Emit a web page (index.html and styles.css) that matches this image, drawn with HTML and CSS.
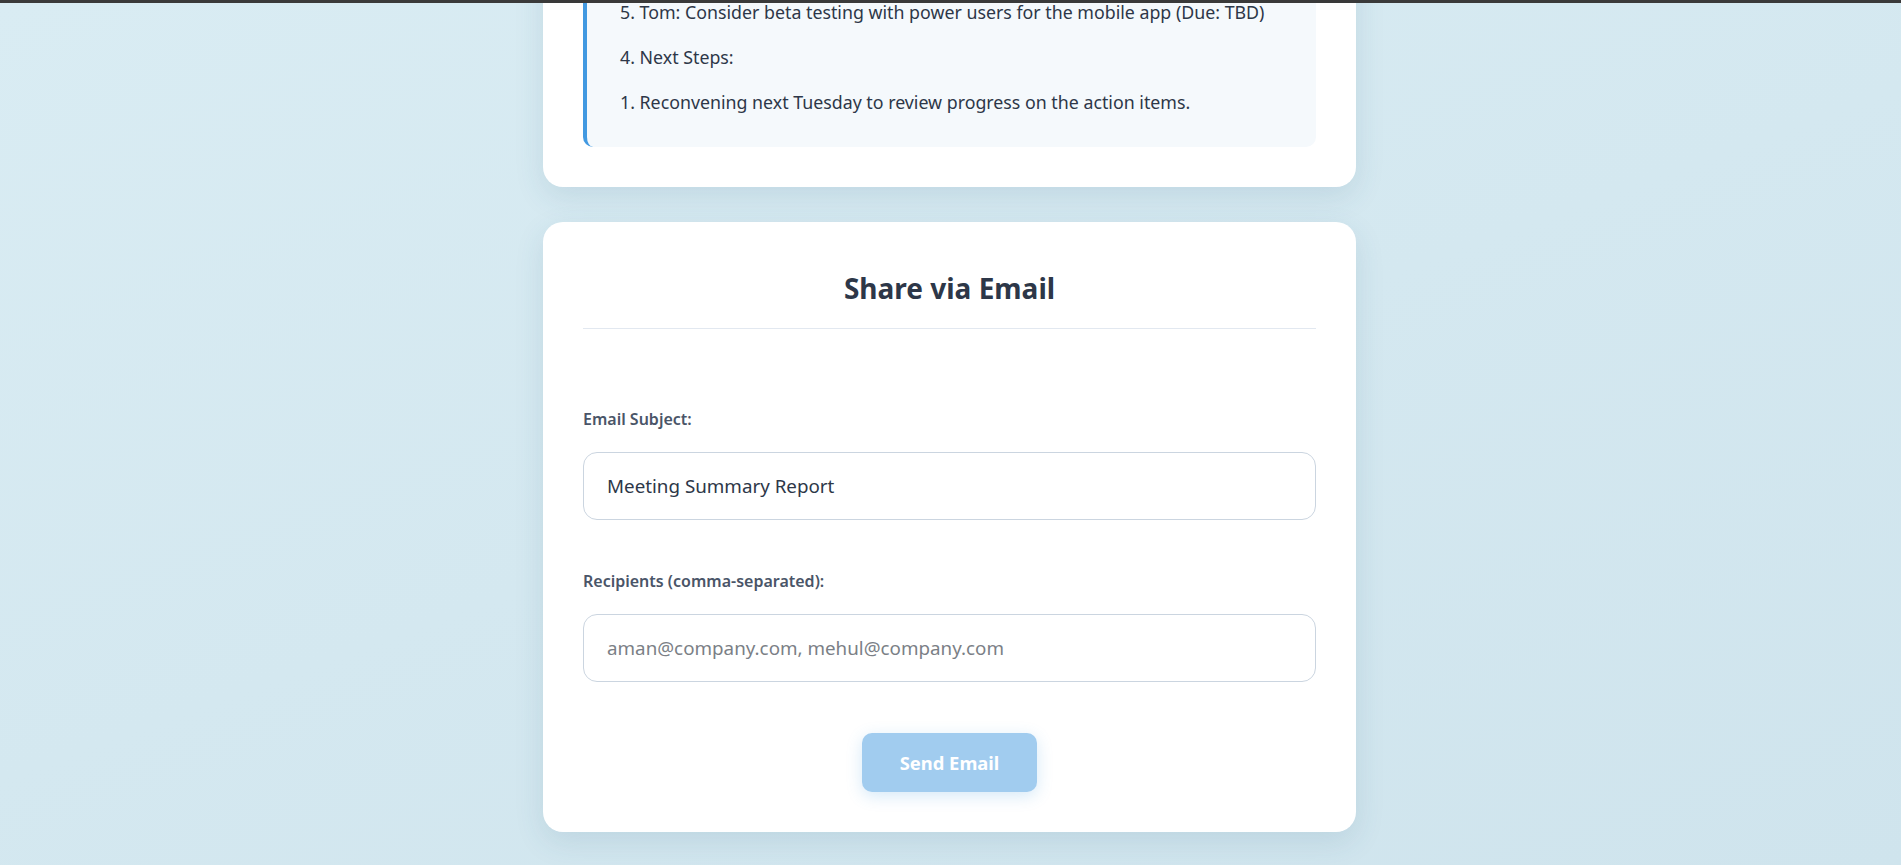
FILE: index.html
```html
<!DOCTYPE html>
<html lang="en">
<head>
<meta charset="utf-8">
<title>Meeting Summary</title>
<link rel="stylesheet" href="styles.css">
</head>
<body>
<div class="topbar"></div>
<main class="stack">
  <section class="card summary-card">
    <div class="summary">
      <p>5. Tom: Consider beta testing with power users for the mobile app (Due: TBD)</p>
      <p>4. Next Steps:</p>
      <p>1. Reconvening next Tuesday to review progress on the action items.</p>
    </div>
  </section>
  <section class="card email-card">
    <h2 class="email-title">Share via Email</h2>
    <form class="email-form">
      <div class="field">
        <label class="field-label" for="subject">Email Subject:</label>
        <input class="field-input" id="subject" type="text" value="Meeting Summary Report">
      </div>
      <div class="field">
        <label class="field-label" for="recipients">Recipients (comma-separated):</label>
        <input class="field-input" id="recipients" type="text" placeholder="aman@company.com, mehul@company.com">
      </div>
      <div class="actions">
        <button class="send-btn" type="button">Send Email</button>
      </div>
    </form>
  </section>
</main>
</body>
</html>
```

FILE: styles.css
```css
* { box-sizing: border-box; }

html, body {
  margin: 0;
  padding: 0;
}

body {
  min-height: 100vh;
  overflow: hidden;
  font-family: "Noto Sans", "Open Sans", sans-serif;
  color: #2d3748;
  background: linear-gradient(160deg, #d9ecf3 0%, #d4e8f0 50%, #cfe4ed 100%);
}

.topbar {
  position: fixed;
  top: 0;
  left: 0;
  right: 0;
  height: 3px;
  background: #3a3a3a;
  z-index: 10;
}

.stack {
  width: 815px;
  margin: -72px auto 0;
  padding-right: 2px;
  display: flex;
  flex-direction: column;
  gap: 35px;
}

.card {
  background: #ffffff;
  border-radius: 20px;
  padding: 40px;
  box-shadow: 0 10px 30px rgba(40, 90, 120, 0.12);
}

.summary {
  background: #f5f9fc;
  border-left: 4px solid #4299e1;
  border-radius: 10px;
  padding: 30px 33px;
  display: flex;
  flex-direction: column;
  gap: 16px;
}

.summary p {
  margin: 0;
  font-size: 17.8px;
  line-height: 29px;
  color: #2d3748;
}

.email-title {
  margin: 8px 0 0;
  padding-bottom: 22px;
  border-bottom: 1px solid #e2e8f0;
  text-align: center;
  font-size: 28px;
  line-height: 36px;
  font-weight: 700;
  color: #2d3748;
}

.email-form {
  margin: 79px 0 0;
  display: flex;
  flex-direction: column;
  gap: 50px;
}

.field {
  display: flex;
  flex-direction: column;
  gap: 22px;
}

.field-label {
  font-size: 16px;
  line-height: 22px;
  font-weight: 600;
  color: #4a5568;
}

.field-input {
  width: 100%;
  height: 68px;
  padding: 0 23px;
  border: 1px solid #cbd5e0;
  border-radius: 14px;
  font-family: inherit;
  font-size: 18.8px;
  color: #2d3748;
  background: #ffffff;
  outline: none;
}

.field-input::placeholder {
  color: #7b7f86;
}

.actions {
  display: flex;
  justify-content: center;
  margin-top: 1px;
}

.send-btn {
  width: 175px;
  height: 59px;
  border: none;
  border-radius: 10px;
  background: #a1ccef;
  color: #ffffff;
  font-family: inherit;
  font-size: 18.4px;
  font-weight: 700;
  box-shadow: 0 4px 16px rgba(66, 153, 225, 0.22);
  cursor: pointer;
}
```
